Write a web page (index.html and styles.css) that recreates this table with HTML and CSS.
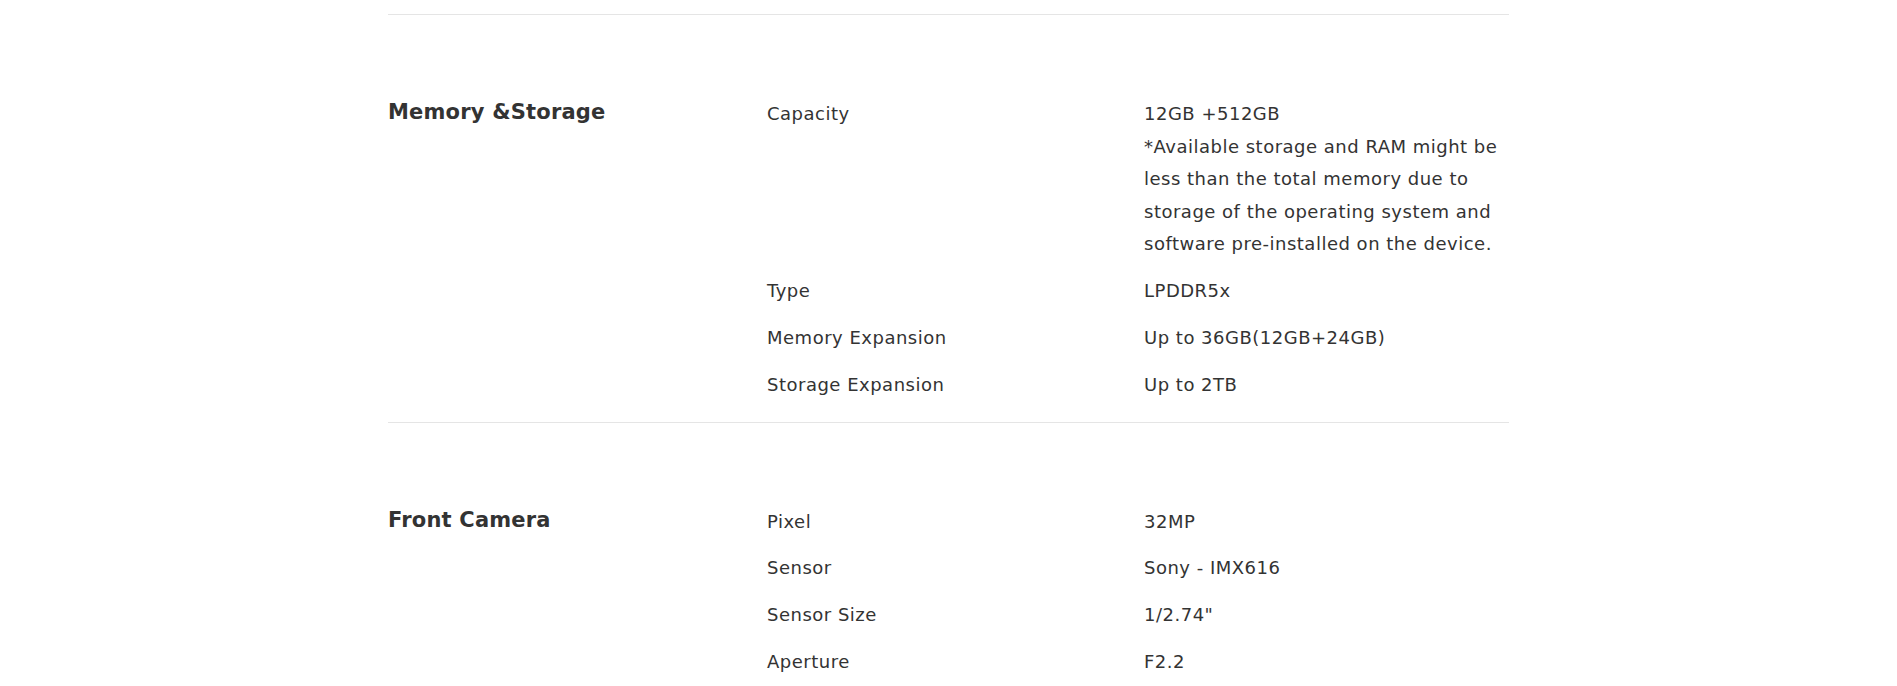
FILE: index.html
```html
<!DOCTYPE html>
<html lang="en">
<head>
<meta charset="utf-8">
<title>Specs</title>
<link rel="stylesheet" href="styles.css">
</head>
<body>
<div class="specs">
  <section class="group">
    <h2 class="group-title">Memory &amp;Storage</h2>
    <div class="rows">
      <div class="row"><div class="label">Capacity</div><div class="value">12GB +512GB<br>*Available storage and RAM might be less than the total memory due to storage of the operating system and software pre-installed on the device.</div></div>
      <div class="row"><div class="label">Type</div><div class="value">LPDDR5x</div></div>
      <div class="row"><div class="label">Memory Expansion</div><div class="value">Up to 36GB(12GB+24GB)</div></div>
      <div class="row"><div class="label">Storage Expansion</div><div class="value">Up to 2TB</div></div>
    </div>
  </section>
  <section class="group">
    <h2 class="group-title">Front Camera</h2>
    <div class="rows">
      <div class="row"><div class="label">Pixel</div><div class="value">32MP</div></div>
      <div class="row"><div class="label">Sensor</div><div class="value">Sony - IMX616</div></div>
      <div class="row"><div class="label">Sensor Size</div><div class="value">1/2.74"</div></div>
      <div class="row"><div class="label">Aperture</div><div class="value">F2.2</div></div>
    </div>
  </section>
</div>
</body>
</html>
```
FILE: styles.css
```css
* { box-sizing: border-box; }
html, body { margin: 0; padding: 0; background: #fff; }
body {
  font-family: "DejaVu Sans", "Open Sans", sans-serif;
  color: #333;
  padding-top: 14px;
}
.specs {
  width: 1121px;
  margin: 0 auto;
}
.group {
  display: grid;
  grid-template-columns: 379px 1fr;
  border-top: 1px solid #e5e5e5;
  padding: 83px 0 6px;
}
.group-title {
  margin: 0;
  font-size: 21px;
  font-weight: 700;
  line-height: 28px;
  letter-spacing: 0.2px;
}
.rows { display: flex; flex-direction: column; }
.row {
  display: grid;
  grid-template-columns: 377px 1fr;
  font-size: 18px;
  letter-spacing: 0.5px;
  line-height: 32.6px;
  margin-bottom: 14.2px;
}
.value { width: 366px; }
```
